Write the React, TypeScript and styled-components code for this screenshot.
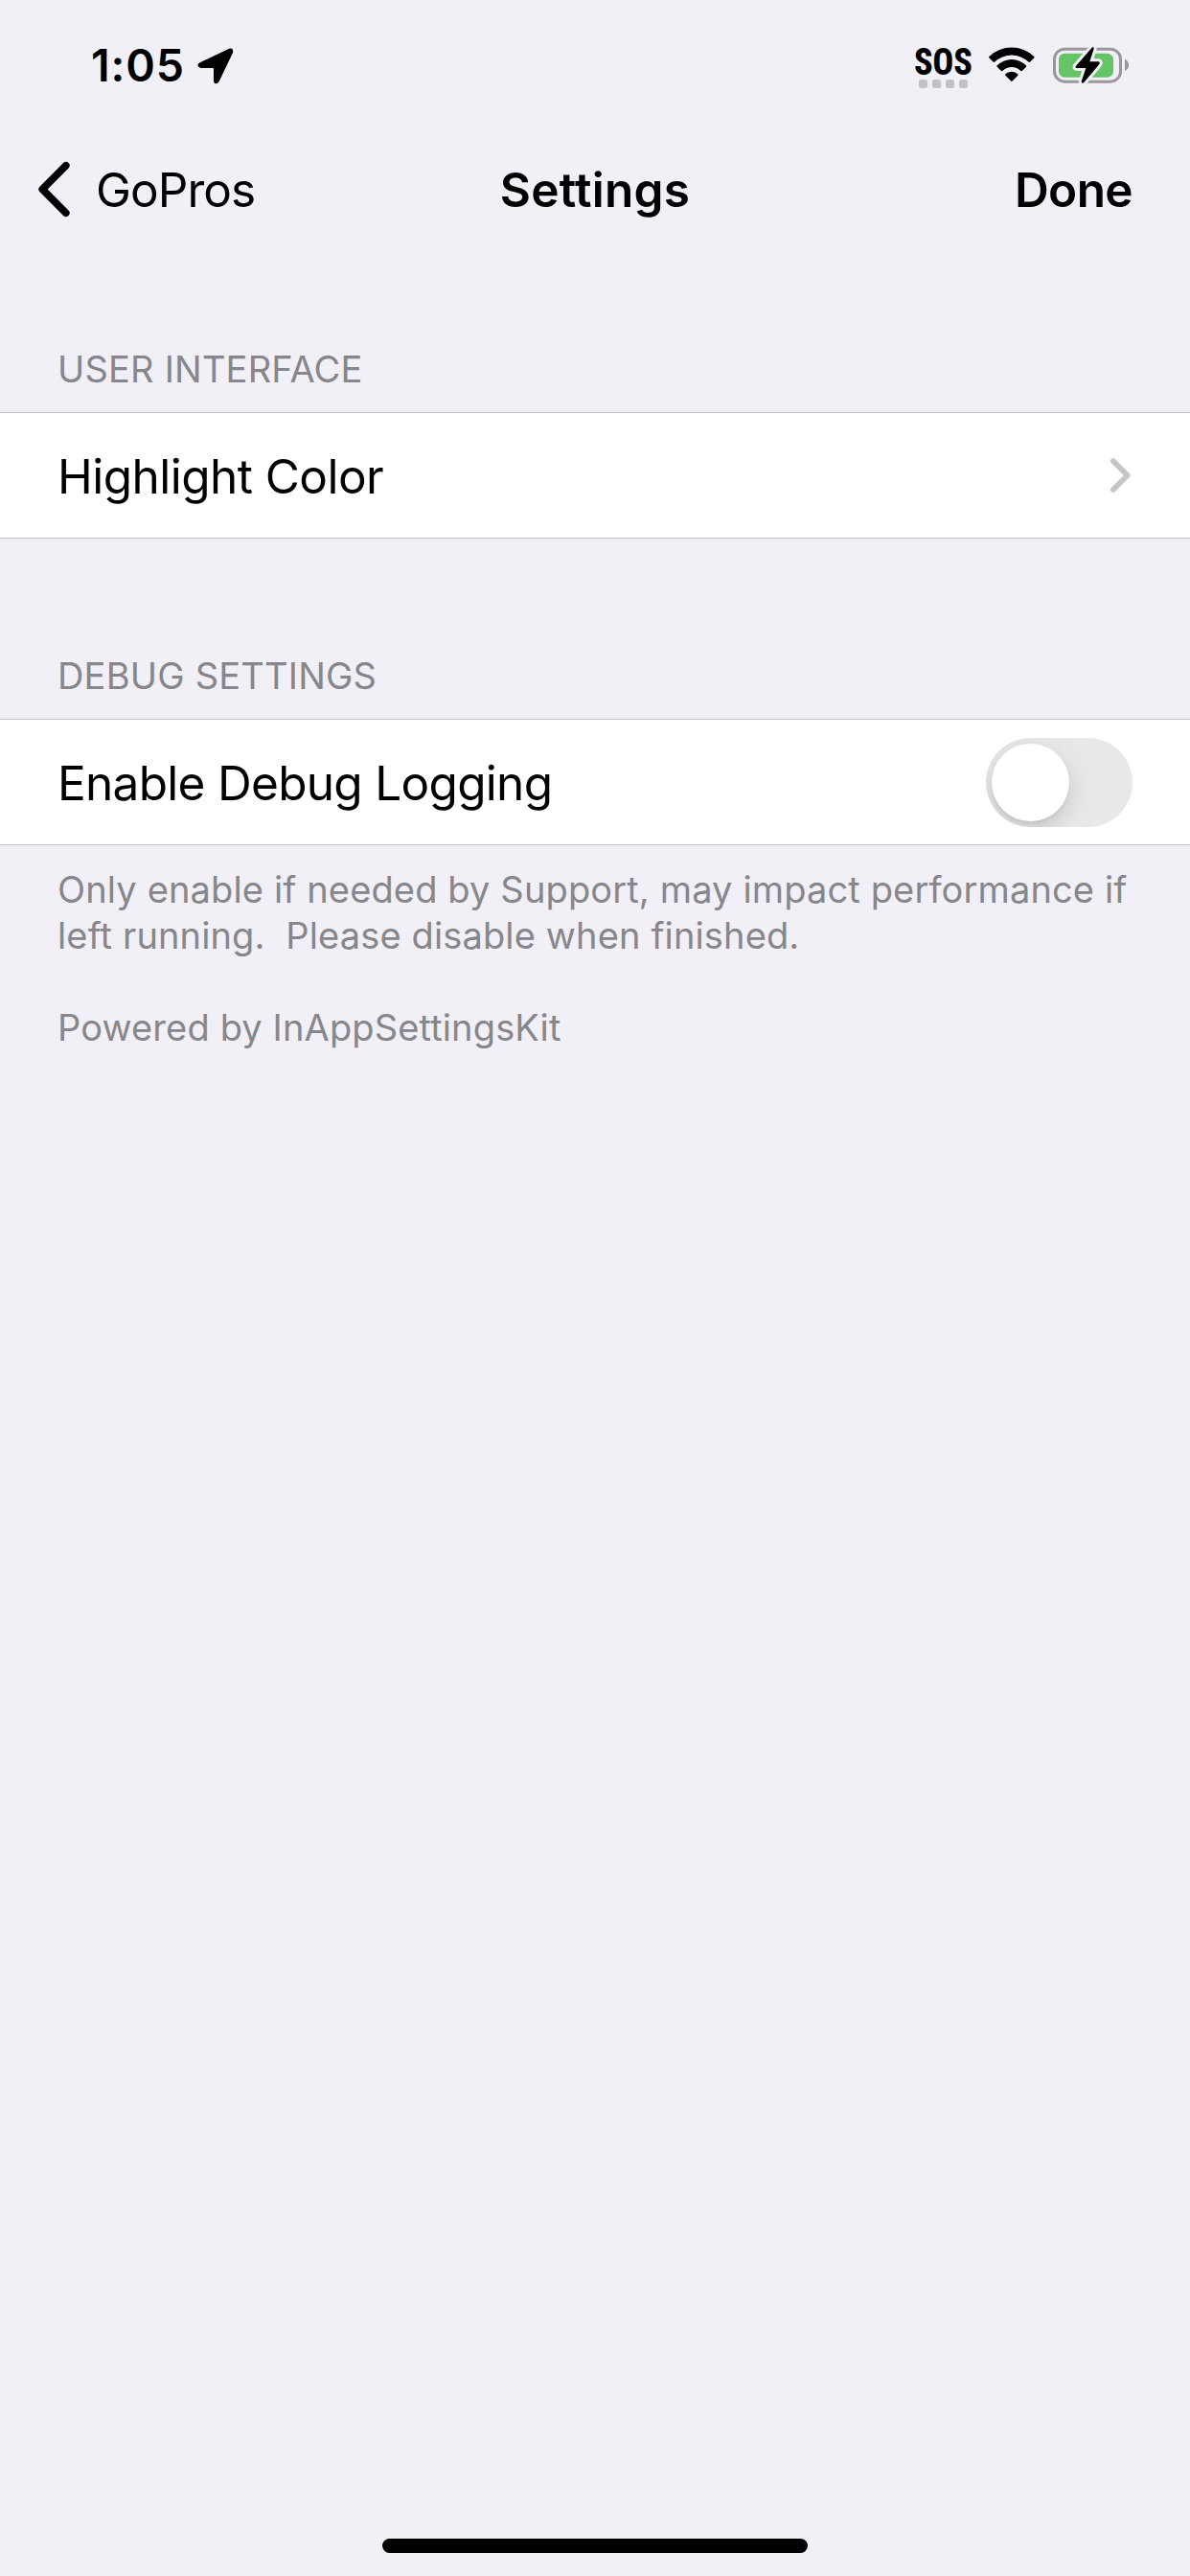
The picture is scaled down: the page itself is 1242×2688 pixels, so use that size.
import React, { useState } from "react";
import styled, { createGlobalStyle } from "styled-components";

const color = {
  background: "#f1f0f6",
  surface: "#ffffff",
  separator: "#c5c4c8",
  text: "#000000",
  secondary: "#87868b",
  disclosure: "#c5c5c7",
  outline: "#98979c",
  charge: "#65c466",
};

const GlobalStyle = createGlobalStyle`
  html, body {
    margin: 0;
    background: ${color.background};
  }
  *, *::before, *::after {
    box-sizing: border-box;
  }
`;

const Screen = styled.div`
  width: 1242px;
  height: 2688px;
  display: flex;
  flex-direction: column;
  overflow: hidden;
  background: ${color.background};
  color: ${color.text};
  font-family: Inter, "Liberation Sans", sans-serif;
`;

const StatusBar = styled.header`
  height: 132px;
  padding: 0 64px 0 95px;
  display: flex;
  align-items: flex-start;
  justify-content: space-between;
`;

const Clock = styled.div`
  display: flex;
  padding-top: 40px;
`;

const Time = styled.span`
  width: 111px;
  font-size: 46.5px;
  font-weight: 600;
  line-height: 56px;
  letter-spacing: 0.9px;
  white-space: nowrap;
`;

const LocationIcon = styled.svg`
  width: 38px;
  height: 38px;
  margin-top: 9.5px;
`;

const Indicators = styled.div`
  display: flex;
  padding-top: 48px;
`;

const Cellular = styled.div`
  width: 58px;
  margin-right: 19px;
  display: flex;
  flex-direction: column;
  align-items: center;
`;

const Sos = styled.span`
  height: 30px;
  font-family: Roboto, "Liberation Sans", sans-serif;
  font-size: 39.5px;
  font-weight: 800;
  font-stretch: 75%;
  line-height: 33px;
  transform: scaleX(0.91);
`;

const SignalDots = styled.div`
  display: flex;
  gap: 5px;
  margin-top: 5px;
`;

const Dot = styled.i`
  width: 9px;
  height: 9px;
  border-radius: 2.5px;
  background: #c2c1c7;
`;

const WifiIcon = styled.svg`
  width: 48px;
  height: 37px;
  margin: 1px 19px 0 0;
`;

const BatteryIcon = styled.svg`
  width: 79px;
  height: 41px;
`;

const NavBar = styled.nav`
  height: 132px;
  padding: 0 60px;
  display: grid;
  grid-template-columns: 1fr auto 1fr;
  align-items: center;
`;

const NavButton = styled.button<{ $strong?: boolean }>`
  display: flex;
  align-items: center;
  justify-self: ${(p) => (p.$strong ? "end" : "start")};
  padding: 0;
  border: 0;
  background: none;
  color: inherit;
  font-family: inherit;
  font-size: 49.5px;
  font-weight: ${(p) => (p.$strong ? 600 : 400)};
  line-height: 60px;
  letter-spacing: ${(p) => (p.$strong ? "-0.6px" : "-0.94px")};
`;

const BackIcon = styled.svg`
  width: 36px;
  height: 60px;
  margin: 0 25px 0 -21px;
`;

const Title = styled.h1`
  margin: 0;
  font-size: 49.5px;
  font-weight: 600;
  line-height: 60px;
  letter-spacing: 0.3px;
`;

const Section = styled.section`
  display: flex;
  flex-direction: column;
`;

const SectionHeader = styled.h2<{ $space: number }>`
  margin: 0;
  padding: ${(p) => p.$space}px 60px 22px;
  color: ${color.secondary};
  font-size: 38px;
  font-weight: 400;
  line-height: 46px;
  letter-spacing: 0.2px;
  text-transform: uppercase;
`;

const Row = styled.div`
  height: 132px;
  padding: 0 60px;
  display: flex;
  align-items: center;
  justify-content: space-between;
  border: solid ${color.separator};
  border-width: 1px 0;
  background: ${color.surface};
`;

const Label = styled.span<{ $tracking: number }>`
  padding-top: 2px;
  font-size: 49.5px;
  line-height: 60px;
  letter-spacing: ${(p) => p.$tracking}px;
`;

const DisclosureIcon = styled.svg`
  width: 24px;
  height: 40px;
`;

const Switch = styled.button`
  width: 153px;
  height: 93px;
  padding: 6px;
  display: flex;
  justify-content: flex-start;
  overflow: hidden;
  border: 0;
  border-radius: 47px;
  background: #e8e8e8;

  &[aria-checked="true"] {
    justify-content: flex-end;
    background: ${color.charge};
  }
`;

const Knob = styled.span`
  width: 81px;
  height: 81px;
  border-radius: 50%;
  background: ${color.surface};
  box-shadow: 0 9px 24px rgba(0, 0, 0, 0.15), 0 3px 3px rgba(0, 0, 0, 0.05);
`;

const Footnote = styled.p<{ $gap: number }>`
  margin: ${(p) => p.$gap}px 0 0;
  padding: 0 60px;
  color: ${color.secondary};
  font-size: 38px;
  line-height: 48px;
  letter-spacing: 0.14px;
  white-space: pre;
`;

const HomeIndicator = styled.div`
  width: 444px;
  height: 15px;
  margin: auto auto 24px;
  border-radius: 8px;
  background: ${color.text};
`;

const BOLT =
  "M599 57 L549 114 Q545 121 553 121 L580 121 L566 163 Q567 172 574 166 L622 109 Q626 101 618 101 L592 101 L605 61 Q605 52 599 57 Z";

export default function App() {
  const [logging, setLogging] = useState(false);

  return (
    <Screen>
      <GlobalStyle />
      <StatusBar>
        <Clock>
          <Time>1:05</Time>
          <LocationIcon viewBox="377 58 114 114" aria-hidden>
            <path d="M475 61 Q491 56 488 73 L445 163 Q440 171 433 170 Q428 168 428 161 L428 124 Q428 121 425 121 L388 121 Q380 120 378 113 Q378 107 385 104 Z" />
          </LocationIcon>
        </Clock>
        <Indicators>
          <Cellular>
            <Sos>SOS</Sos>
            <SignalDots>
              <Dot />
              <Dot />
              <Dot />
              <Dot />
            </SignalDots>
          </Cellular>
          <WifiIcon viewBox="275 57 144 111" aria-hidden>
            <path d="M276 87 A102 102 0 0 1 417 87 Q419 89 417 91 L404 104 Q402 105 400 104 A78 78 0 0 0 293 104 Q291 105 289 104 L276 91 Q274 89 276 87 Z" />
            <path d="M301 115 A64 64 0 0 1 392 115 Q394 117 392 119 L379 132 Q377 133 375 132 A40 40 0 0 0 318 132 Q316 133 314 132 L301 119 Q299 117 301 115 Z" />
            <path d="M327 142 A29 29 0 0 1 366 142 Q368 144 366 146 L348 164 Q346.5 166 345 164 L327 146 Q325 144 327 142 Z" />
          </WifiIcon>
          <BatteryIcon viewBox="477 52 237 123" aria-hidden>
            <rect x="481.5" y="61.5" width="207" height="102" rx="32" fill="none" stroke={color.outline} strokeWidth="9" />
            <rect x="495" y="75" width="171" height="75" rx="19" fill={color.charge} />
            <path d="M702 93 Q714 98 714 111.500 Q714 125 702 130 Z" fill={color.outline} />
            <path d={BOLT} fill={color.background} stroke={color.background} strokeWidth="18" strokeLinejoin="round" />
            <path d={BOLT} />
          </BatteryIcon>
        </Indicators>
      </StatusBar>

      <NavBar>
        <NavButton>
          <BackIcon viewBox="0 0 36 60" fill="none" aria-hidden>
            <path d="M29.800 4.700 L5.200 29.500 L29.800 54.300" stroke={color.text} strokeWidth="7.600" strokeLinecap="round" strokeLinejoin="round" />
          </BackIcon>
          GoPros
        </NavButton>
        <Title>Settings</Title>
        <NavButton $strong>Done</NavButton>
      </NavBar>

      <Section>
        <SectionHeader $space={98}>User Interface</SectionHeader>
        <Row>
          <Label $tracking={-0.54}>Highlight Color</Label>
          <DisclosureIcon viewBox="0 0 24 40" fill="none" aria-hidden>
            <path d="M3.800 5 L18.800 20 L3.800 35" stroke={color.disclosure} strokeWidth="5.600" strokeLinecap="round" strokeLinejoin="round" />
          </DisclosureIcon>
        </Row>
      </Section>

      <Section>
        <SectionHeader $space={120}>Debug Settings</SectionHeader>
        <Row>
          <Label $tracking={-0.7}>Enable Debug Logging</Label>
          <Switch
            role="switch"
            aria-checked={logging}
            aria-label="Enable Debug Logging"
            onClick={() => setLogging(!logging)}
          >
            <Knob />
          </Switch>
        </Row>
        <Footnote $gap={22}>
          {"Only enable if needed by Support, may impact performance if\nleft running.  Please disable when finished."}
        </Footnote>
        <Footnote $gap={48}>Powered by InAppSettingsKit</Footnote>
      </Section>

      <HomeIndicator />
    </Screen>
  );
}
